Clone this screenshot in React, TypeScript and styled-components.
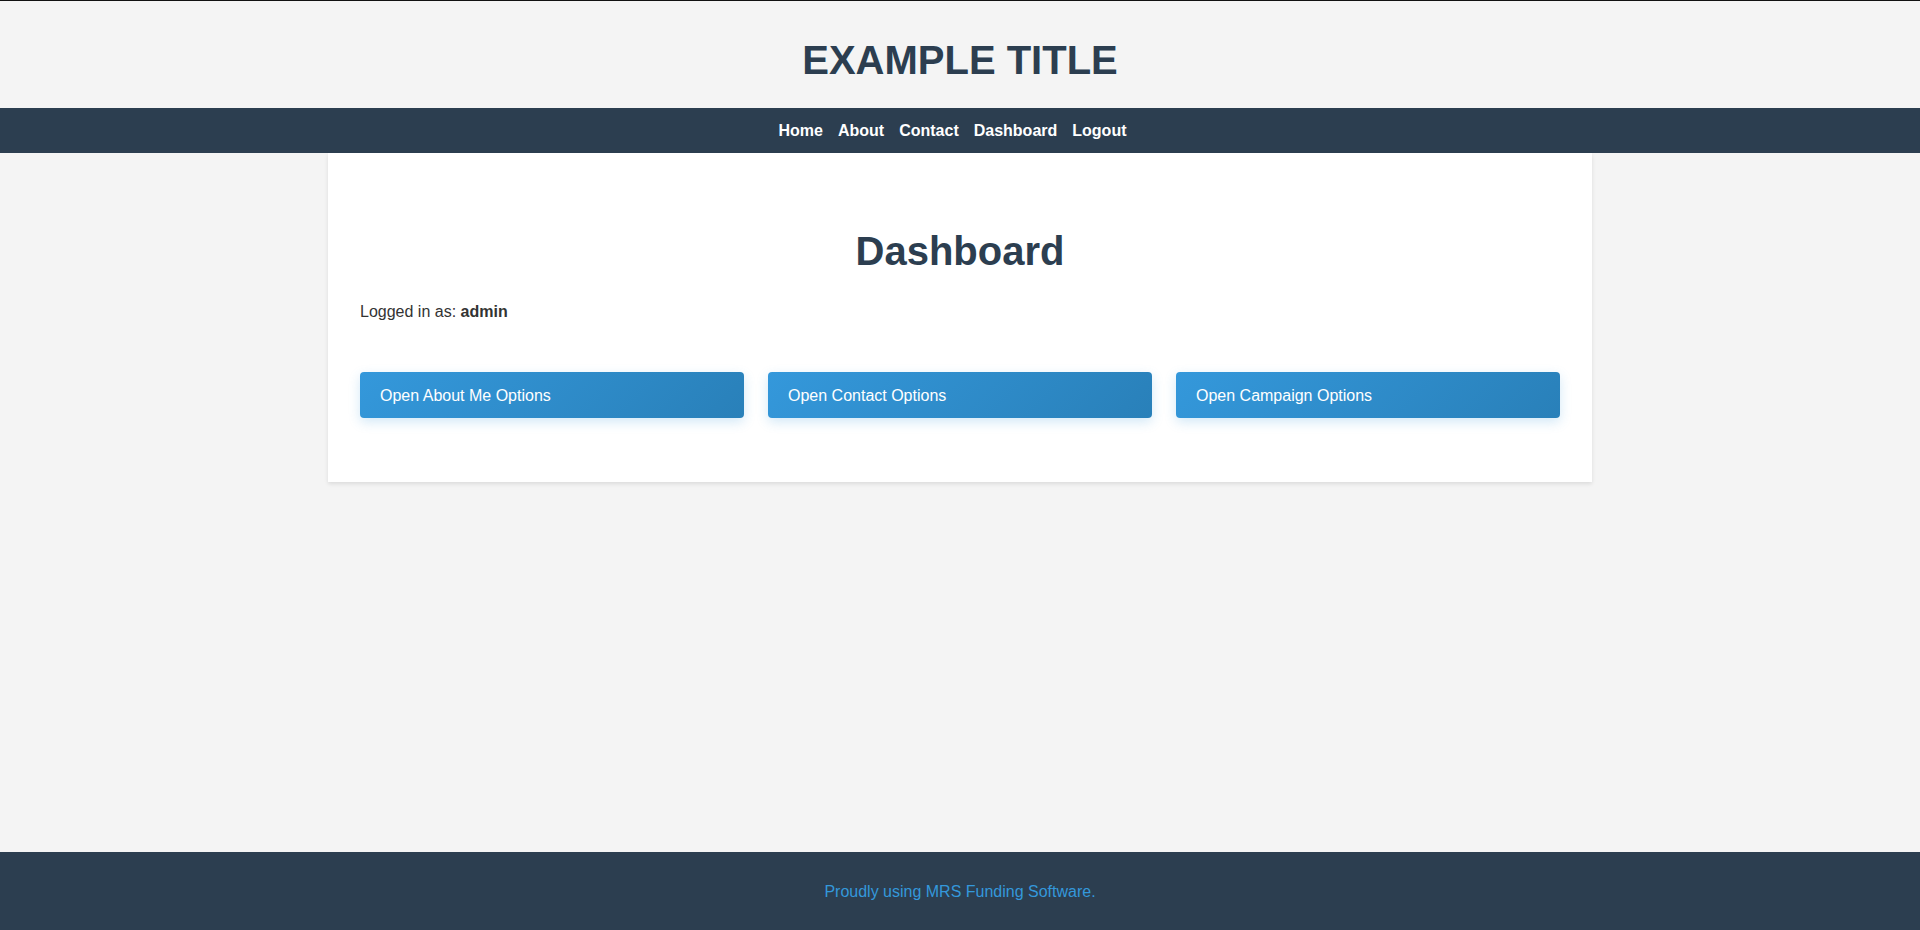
import React from "react";
import styled, { createGlobalStyle } from "styled-components";

const GlobalStyle = createGlobalStyle`
  * { box-sizing: border-box; }
  html, body { margin: 0; padding: 0; }
  body {
    background: #f4f4f4;
    font-family: "Liberation Sans", Arial, sans-serif;
    color: #333;
  }
`;

const Page = styled.div`
  min-height: 100vh;
  display: flex;
  flex-direction: column;
`;

const Header = styled.header`
  height: 108px;
  border-top: 1px solid #111;
  padding-top: 36px;
  text-align: center;
`;

const SiteTitle = styled.h1`
  margin: 0;
  font-size: 40px;
  line-height: 46px;
  font-weight: 700;
  color: #2c3e50;
`;

const Nav = styled.nav`
  height: 45px;
  background: #2c3e50;
  display: flex;
  justify-content: center;
  align-items: center;
  gap: 15px;
  padding-right: 15px;
`;

const NavLink = styled.a`
  color: #fff;
  font-weight: 700;
  font-size: 16px;
  line-height: 19px;
  text-decoration: none;
  cursor: pointer;
`;

const Main = styled.main`
  flex: 1;
`;

const Card = styled.section`
  width: 1264px;
  margin: 0 auto;
  background: #fff;
  padding: 32px;
  box-shadow: 0 2px 4px rgba(0, 0, 0, 0.1);
`;

const Heading = styled.h2`
  margin: 43px 0 0;
  font-size: 40px;
  line-height: 46px;
  font-weight: 700;
  color: #2c3e50;
  text-align: center;
`;

const Info = styled.p`
  margin: 26px 0 0;
  font-size: 16px;
  line-height: 24px;
  color: #333;
`;

const ButtonRow = styled.div`
  margin: 48px 0 32px;
  display: grid;
  grid-template-columns: repeat(3, 1fr);
  gap: 24px;
`;

const OptionButton = styled.button`
  height: 46px;
  padding: 2px 20px 0;
  border: none;
  border-radius: 4px;
  background: linear-gradient(135deg, #3498db, #2980b9);
  color: #fff;
  font-family: "Liberation Sans", Arial, sans-serif;
  font-size: 16px;
  text-align: left;
  cursor: pointer;
  box-shadow: 0 4px 12px rgba(52, 152, 219, 0.22);
`;

const Footer = styled.footer`
  height: 78px;
  padding-top: 2px;
  background: #2c3e50;
  display: flex;
  align-items: center;
  justify-content: center;
`;

const FooterText = styled.p`
  margin: 0;
  font-size: 16px;
  line-height: 20px;
  color: #3498db;
`;

const links = ["Home", "About", "Contact", "Dashboard", "Logout"];
const buttons = ["Open About Me Options", "Open Contact Options", "Open Campaign Options"];

export default function App() {
  return (
    <>
      <GlobalStyle />
      <Page>
        <Header>
          <SiteTitle>EXAMPLE TITLE</SiteTitle>
        </Header>
        <Nav>
          {links.map((l) => (
            <NavLink key={l}>{l}</NavLink>
          ))}
        </Nav>
        <Main>
          <Card>
            <Heading>Dashboard</Heading>
            <Info>
              Logged in as: <strong>admin</strong>
            </Info>
            <ButtonRow>
              {buttons.map((b) => (
                <OptionButton key={b}>{b}</OptionButton>
              ))}
            </ButtonRow>
          </Card>
        </Main>
        <Footer>
          <FooterText>Proudly using MRS Funding Software.</FooterText>
        </Footer>
      </Page>
    </>
  );
}
